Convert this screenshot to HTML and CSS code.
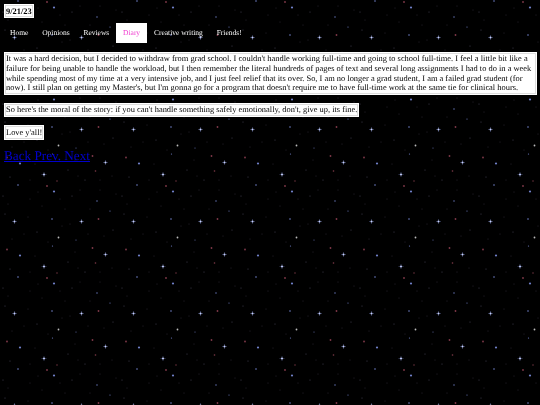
FILE: index.html
```html
<!DOCTYPE html>
<html lang="en">
<head>
<meta charset="utf-8">
<title>Diary</title>
<link rel="stylesheet" href="styles.css">
</head>
<body>
<div class="box date">9/21/23</div>
<nav class="nav">
  <a class="nav-item" href="#">Home</a>
  <a class="nav-item" href="#">Opinions</a>
  <a class="nav-item" href="#">Reviews</a>
  <a class="nav-item active" href="#">Diary</a>
  <a class="nav-item" href="#">Creative writing</a>
  <a class="nav-item" href="#">Friends!</a>
</nav>
<p class="box para first">It was a hard decision, but I decided to withdraw from grad school. I couldn't handle working full-time and going to school full-time. I feel a little bit like a failure for being unable to handle the workload, but I then remember the literal hundreds of pages of text and several long assignments I had to do in a week while spending most of my time at a very intensive job, and I just feel relief that its over. So, I am no longer a grad student, I am a failed grad student (for now). I still plan on getting my Master's, but I'm gonna go for a program that doesn't require me to have full-time work at the same tie for clinical hours.</p>
<p class="box para inline">So here's the moral of the story: if you can't handle something safely emotionally, don't, give up, its fine.</p>
<p class="box para inline">Love y'all!</p>
<div class="pager"><a href="#">Back</a><a href="#"> Prev.</a><a href="#"> Next</a></div>
</body>
</html>
```

FILE: styles.css
```css
html, body { margin: 0; padding: 0; }
body {
  min-height: 405px;
  box-sizing: border-box;
  padding: 4px 3px 0 4px;
  font-family: "Liberation Serif", "Times New Roman", serif;
  font-size: 8.42px;
  line-height: 9.8px;
  text-rendering: geometricPrecision;
  color: #000;
  background-color: #000;
  background-image: url("data:image/svg+xml,%3Csvg xmlns='http://www.w3.org/2000/svg' width='119' height='92'%3E%3Cdefs%3E%3Cg id='s'%3E%3Crect x='-2.5' y='-.3' width='5' height='.6' fill='%238ea0f0' opacity='.5'/%3E%3Crect x='-.3' y='-2.5' width='.6' height='5' fill='%238ea0f0' opacity='.5'/%3E%3Ccircle r='1' fill='%23c8d2ff'/%3E%3C/g%3E%3C/defs%3E%3Cuse href='%23s' x='14.5' y='37.5'/%3E%3Cuse href='%23s' x='81.5' y='37.5'/%3E%3Cuse href='%23s' x='105.5' y='70.5'/%3E%3Cuse href='%23s' x='44' y='82.5'/%3E%3Cg fill='%236f80c8'%3E%3Ccircle cx='20' cy='71.5' r='1.1'/%3E%3Ccircle cx='54' cy='7.5' r='1.1'/%3E%3Ccircle cx='52' cy='35' r='.8'/%3E%3Ccircle cx='52.5' cy='62' r='.6'/%3E%3Ccircle cx='18' cy='1' r='.8'/%3E%3Ccircle cx='97' cy='17' r='.7'/%3E%3Ccircle cx='76' cy='56' r='.5'/%3E%3Ccircle cx='110' cy='27' r='.6'/%3E%3C/g%3E%3Ccircle cx='58.5' cy='53.5' r='.9' fill='%23bbb'/%3E%3Cg fill='%23803848'%3E%3Ccircle cx='7' cy='65.5' r='.9'/%3E%3Ccircle cx='92.5' cy='64' r='.9'/%3E%3Ccircle cx='98.5' cy='35' r='.9'/%3E%3Ccircle cx='47' cy='2' r='.9'/%3E%3Ccircle cx='95.5' cy='79' r='.8'/%3E%3Ccircle cx='57' cy='89' r='.7'/%3E%3C/g%3E%3Cg fill='%234c4860'%3E%3Ccircle cx='5' cy='30' r='.5'/%3E%3Ccircle cx='30' cy='15' r='.4'/%3E%3Ccircle cx='37' cy='48' r='.5'/%3E%3Ccircle cx='65' cy='25' r='.4'/%3E%3Ccircle cx='72' cy='12' r='.5'/%3E%3Ccircle cx='113' cy='46' r='.5'/%3E%3Ccircle cx='88' cy='50' r='.4'/%3E%3Ccircle cx='24' cy='50' r='.4'/%3E%3Ccircle cx='10' cy='85' r='.5'/%3E%3Ccircle cx='30' cy='88' r='.4'/%3E%3Ccircle cx='68' cy='78' r='.5'/%3E%3Ccircle cx='85' cy='88' r='.5'/%3E%3Ccircle cx='112' cy='84' r='.4'/%3E%3Ccircle cx='42' cy='22' r='.4'/%3E%3Ccircle cx='100' cy='6' r='.4'/%3E%3Ccircle cx='3' cy='12' r='.5'/%3E%3Ccircle cx='75' cy='68' r='.4'/%3E%3Ccircle cx='62' cy='42' r='.4'/%3E%3Ccircle cx='28' cy='33' r='.4'/%3E%3Ccircle cx='12' cy='55' r='.4'/%3E%3Ccircle cx='35' cy='72' r='.4'/%3E%3Ccircle cx='48' cy='58' r='.4'/%3E%3Ccircle cx='70' cy='40' r='.4'/%3E%3Ccircle cx='90' cy='25' r='.4'/%3E%3Ccircle cx='104' cy='52' r='.4'/%3E%3Ccircle cx='116' cy='10' r='.4'/%3E%3Ccircle cx='38' cy='8' r='.4'/%3E%3Ccircle cx='60' cy='15' r='.4'/%3E%3Ccircle cx='80' cy='6' r='.4'/%3E%3Ccircle cx='8' cy='20' r='.4'/%3E%3Ccircle cx='100' cy='88' r='.4'/%3E%3Ccircle cx='78' cy='84' r='.4'/%3E%3C/g%3E%3C/svg%3E");
  background-size: 119px 92px;
}
.box {
  background: #fff;
  border: 1px solid #fff;
  box-shadow: inset 0 0 0 1px #ddd;
}
.date,
.nav,
.para {
  filter: blur(.3px);
}
.date {
  display: table;
  padding: 1px;
  font-weight: bold;
  line-height: 10px;
}
.nav {
  display: flex;
  align-items: center;
  margin-top: 5px;
  height: 20px;
}
.nav-item {
  padding: 0 6.9px;
  color: #fff;
  text-decoration: none;
  font-size: 7.5px;
  line-height: 20px;
}
.nav-item:first-child { padding-left: 6px; }
.nav-item.active {
  background: #fff;
  color: #f03bcf;
}
.para {
  margin: 8px 0 0;
  padding: 1px;
}
.para.first {
  margin-top: 9px;
}
.para.inline {
  display: table;
  padding: 1.2px 1px;
}
.pager {
  margin-top: 8px;
  font-size: 13.2px;
  line-height: 15px;
  filter: blur(.15px);
}
.pager a { color: #0000cc; }
```
